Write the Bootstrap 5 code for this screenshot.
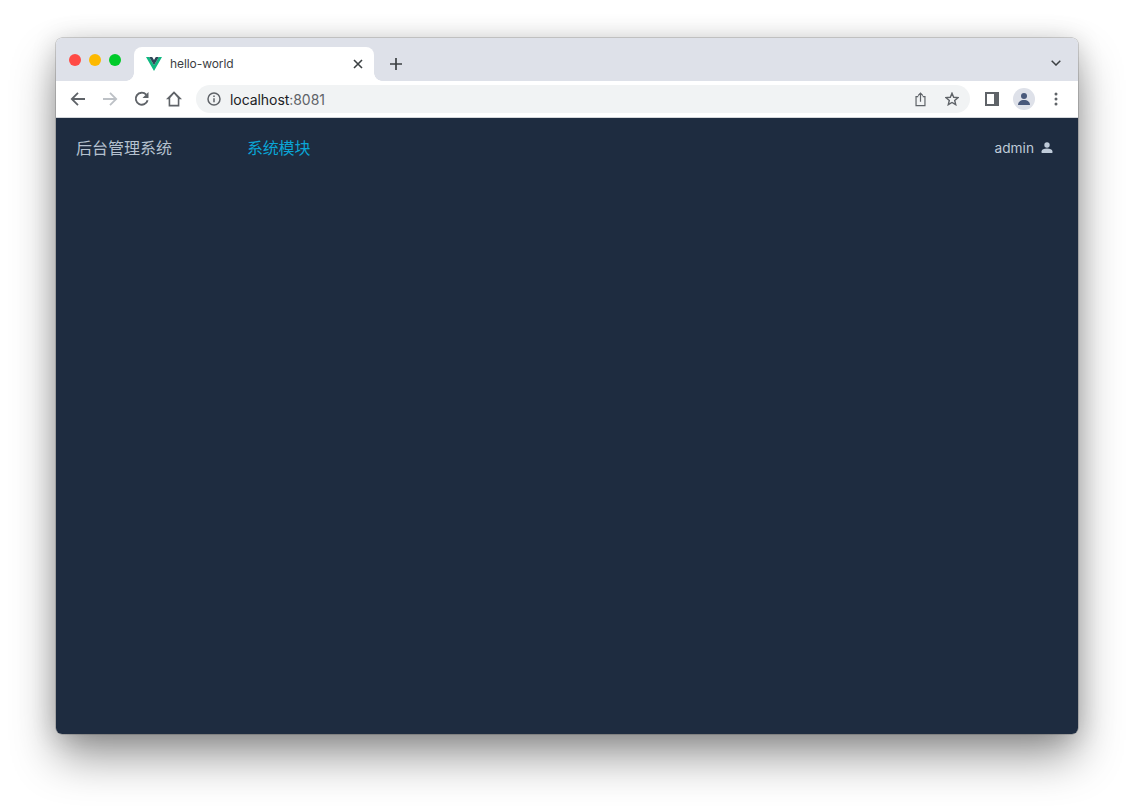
<!DOCTYPE html>
<html lang="zh">
<head>
<meta charset="utf-8">
<title>hello-world</title>
<link href="https://cdn.jsdelivr.net/npm/bootstrap@5.3.0/dist/css/bootstrap.min.css" rel="stylesheet">
<style>
html,body{height:100%;background:#fff;overflow:hidden}
body{font-family:Inter,"Noto Sans CJK SC",sans-serif;padding:38px 56px 74px}
.win{height:696px;border-radius:6px;overflow:hidden;box-shadow:0 0 0 .5px rgba(0,0,0,.3),0 24px 46px -2px rgba(0,0,0,.42),0 2px 26px rgba(0,0,0,.16)}
.strip{height:43px;background:#dee1e9;padding-left:13px}
.lights{width:65px;padding-top:1px;gap:8px}
.dot{width:12px;height:12px;border-radius:50%}
.d1{background:#ff4a46}.d2{background:#fdb900}.d3{background:#00cb2a}
.chrome-tab{width:240px;height:34px;background:#fff;border-radius:8px 8px 0 0;padding:0 11px 0 12px;font-size:12px;color:#3c4043;gap:8px;position:relative}
.chrome-tab::before,.chrome-tab::after{content:"";position:absolute;bottom:0;width:8px;height:8px;background:radial-gradient(circle at 0 0,#dee1e9 7.5px,#fff 8px)}
.chrome-tab::before{left:-8px}
.chrome-tab::after{right:-8px;transform:scaleX(-1)}
.tabname{letter-spacing:-.08px}
.plus{margin-left:16px;margin-top:9px}
.chev{margin-right:17px;margin-top:7px}
.tools{height:36px;background:#fff;padding-left:14px}
.tools svg{display:block;flex:none}
.backs{gap:16px}
.addr{width:774px;height:28px;margin-left:14px;background:#f1f3f4;border-radius:14px;padding:0 11px 0 11px;font-size:14px;color:#202124}
.port{color:#5f6368}
.host{margin-left:9px;letter-spacing:-.06px}
.rights{gap:18px}
.side{margin-left:15px}
.avatar{width:22px;height:22px;margin-left:14px;border-radius:50%;background:#dee1e9}
.kebab{margin-left:19px}
.app{height:617px;background:#1e2c40;border-top:1px solid #d3d6da;padding:0 25px 0 20px}
.topbar{height:60px}
.brand-txt{width:171px;font-size:16px;line-height:1;color:#b5c1cf}
.active-mod{font-size:16px;line-height:1;letter-spacing:-.2px;color:#0aa5d6}
.usr{font-size:13.7px;color:#bfcbd9;gap:7px}
</style>
</head>
<body>
<div class="win d-flex flex-column">
  <div class="strip d-flex align-items-end">
    <div class="lights d-flex align-self-center"><span class="dot d1"></span><span class="dot d2"></span><span class="dot d3"></span></div>
    <div class="chrome-tab d-flex align-items-center">
      <svg width="16" height="14" viewBox="0 0 16 14"><path d="M0 0h3.200L8 8.200 12.800 0H16L8 14z" fill="#10b981"/><path d="M3.200 0h3L8 3.100 9.800 0h3L8 8.200z" fill="#2f4658"/></svg>
      <span class="tabname flex-grow-1">hello-world</span>
      <svg width="10" height="10" viewBox="0 0 10 10"><path d="M1 1l8 8M9 1l-8 8" stroke="#3c4043" stroke-width="1.6" fill="none"/></svg>
    </div>
    <svg class="plus align-self-center" width="12" height="12" viewBox="0 0 12 12"><path d="M6 0v12M0 6h12" stroke="#3c4043" stroke-width="1.7" fill="none"/></svg>
    <svg class="chev align-self-center ms-auto" width="10" height="6" viewBox="0 0 10 6"><path d="M.7.7 5 5 9.300.7" stroke="#3c4043" stroke-width="1.5" fill="none"/></svg>
  </div>
  <div class="tools d-flex align-items-center">
    <div class="d-flex align-items-center backs">
      <svg width="16" height="16" viewBox="0 0 16 16"><path d="M15 8H2M8 1.800 1.800 8 8 14.200" stroke="#5f6368" stroke-width="1.800" fill="none"/></svg>
      <svg width="16" height="16" viewBox="0 0 16 16"><path d="M1 8h13M8 1.800 14.200 8 8 14.200" stroke="#bdc1c6" stroke-width="1.800" fill="none"/></svg>
      <svg width="16" height="16" viewBox="0 0 16 16"><path d="M13.600 9.200A6 6 0 1 1 12.200 3.600" stroke="#5f6368" stroke-width="1.900" fill="none"/><path d="M14.500 1v6h-6z" fill="#5f6368"/></svg>
      <svg width="16" height="16" viewBox="1 1.400 14 13.400"><path d="M8 1.400.9 8.400h2.400v6.200h9.400V8.400h2.400zM4.700 13.200V7.200L8 3.500l3.300 3.700v6z" fill="#5f6368" fill-rule="evenodd"/></svg>
    </div>
    <div class="addr d-flex align-items-center">
      <svg width="14" height="14" viewBox="0 0 14 14"><circle cx="7" cy="7" r="6" stroke="#5f6368" stroke-width="1.500" fill="none"/><path d="M7 6.200v4M7 3.600v1.400" stroke="#5f6368" stroke-width="1.500"/></svg>
      <span class="host flex-grow-1">localhost<span class="port">:8081</span></span>
      <div class="d-flex align-items-center rights">
        <svg width="13" height="15" viewBox="0 0 14 16"><path d="M4.600 5H2.200v9.600h9.600V5H9.400M7 10.500V1.400M4.400 3.800 7 1.200l2.600 2.600" stroke="#5f6368" stroke-width="1.300" fill="none"/></svg>
        <svg width="14" height="14" viewBox="0 0 15 15"><path d="M7.500 1.300 9.300 5.600l4.700.4-3.600 3 1.100 4.600-4-2.400-4 2.400L4.600 9 1 6l4.700-.4z" stroke="#5f6368" stroke-width="1.500" fill="none"/></svg>
      </div>
    </div>
    <svg class="side" width="14" height="14" viewBox="0 0 14 14"><path d="M0 0h14v14H0zM2 2v10h7V2z" fill="#5f6368" fill-rule="evenodd"/></svg>
    <div class="avatar d-flex align-items-center justify-content-center">
      <svg width="14" height="14" viewBox="0 0 14 14"><circle cx="7" cy="4" r="3" fill="#4a5a7c"/><path d="M1 13c0-3 2.500-5 6-5s6 2 6 5z" fill="#4a5a7c"/></svg>
    </div>
    <svg class="kebab" width="4" height="14" viewBox="0 0 4 14"><circle cx="2" cy="2" r="1.500" fill="#5f6368"/><circle cx="2" cy="7" r="1.500" fill="#5f6368"/><circle cx="2" cy="12" r="1.500" fill="#5f6368"/></svg>
  </div>
  <div class="app">
    <div class="topbar d-flex align-items-center">
      <span class="brand-txt">后台管理系统</span>
      <span class="active-mod">系统模块</span>
      <div class="usr d-flex align-items-center ms-auto">
        <span>admin</span>
        <svg width="12" height="12" viewBox="0 0 12 12"><circle cx="6" cy="3" r="2.700" fill="#bfcbd9"/><path d="M.6 11V9.200C.6 7.500 3 6.500 6 6.500s5.400 1 5.400 2.700V11z" fill="#bfcbd9"/></svg>
      </div>
    </div>
  </div>
</div>
<script src="https://cdn.jsdelivr.net/npm/bootstrap@5.3.0/dist/js/bootstrap.bundle.min.js"></script>
</body>
</html>
